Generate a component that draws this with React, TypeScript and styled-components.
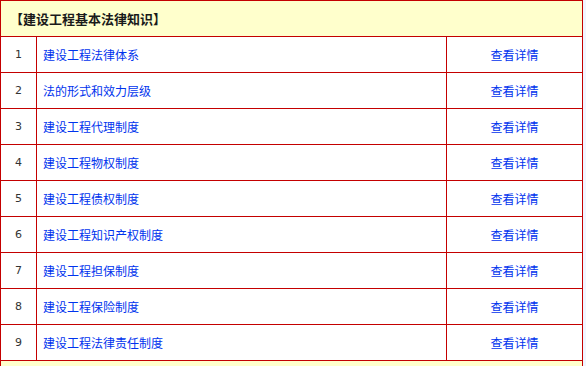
import React from "react";
import styled, { createGlobalStyle } from "styled-components";

const GlobalStyle = createGlobalStyle`
  html, body {
    margin: 0;
    padding: 0;
    background: #f0f5ff;
  }
  body {
    font-family: "Liberation Sans", "Noto Sans CJK SC", sans-serif;
    font-size: 12px;
  }
`;

const Wrapper = styled.div`
  width: 582px;
  background: #ffffff;
`;

const Table = styled.table`
  width: 582px;
  border-collapse: collapse;
  table-layout: fixed;

  td {
    border: 1px solid #c40000;
    padding: 0;
    height: 35px;
    vertical-align: middle;
  }
`;

const HeadCell = styled.td`
  background: #ffffcc;
  padding-left: 9px !important;
  font-family: "Noto Sans CJK SC", sans-serif;
  font-weight: bold;
  font-size: 13px;
  color: #1a1a1a;
`;

const NumCell = styled.td`
  text-align: center;
  color: #333333;
  font-size: 11px;
  font-family: "DejaVu Sans", sans-serif;
`;

const NameCell = styled.td`
  padding-left: 6px !important;
`;

const LinkCell = styled.td`
  text-align: center;
`;

const Link = styled.a`
  color: #0033ee;
  text-decoration: none;
  font-family: "Noto Sans CJK SC", sans-serif;
  font-size: 12px;
`;

const FootCell = styled.td`
  background: #ffffcc;
`;

const items = [
  "建设工程法律体系",
  "法的形式和效力层级",
  "建设工程代理制度",
  "建设工程物权制度",
  "建设工程债权制度",
  "建设工程知识产权制度",
  "建设工程担保制度",
  "建设工程保险制度",
  "建设工程法律责任制度",
];

const App = (): JSX.Element => {
  return (
    <>
      <GlobalStyle />
      <Wrapper>
        <Table>
          <colgroup>
            <col style={{ width: 36 }} />
            <col style={{ width: 410 }} />
            <col style={{ width: 136 }} />
          </colgroup>
          <tbody>
            <tr>
              <HeadCell colSpan={3}>【建设工程基本法律知识】</HeadCell>
            </tr>
            {items.map((name, i) => (
              <tr key={name}>
                <NumCell>{i + 1}</NumCell>
                <NameCell>
                  <Link href="#">{name}</Link>
                </NameCell>
                <LinkCell>
                  <Link href="#">查看详情</Link>
                </LinkCell>
              </tr>
            ))}
            <tr>
              <FootCell colSpan={3} />
            </tr>
          </tbody>
        </Table>
      </Wrapper>
    </>
  );
};

export default App;
